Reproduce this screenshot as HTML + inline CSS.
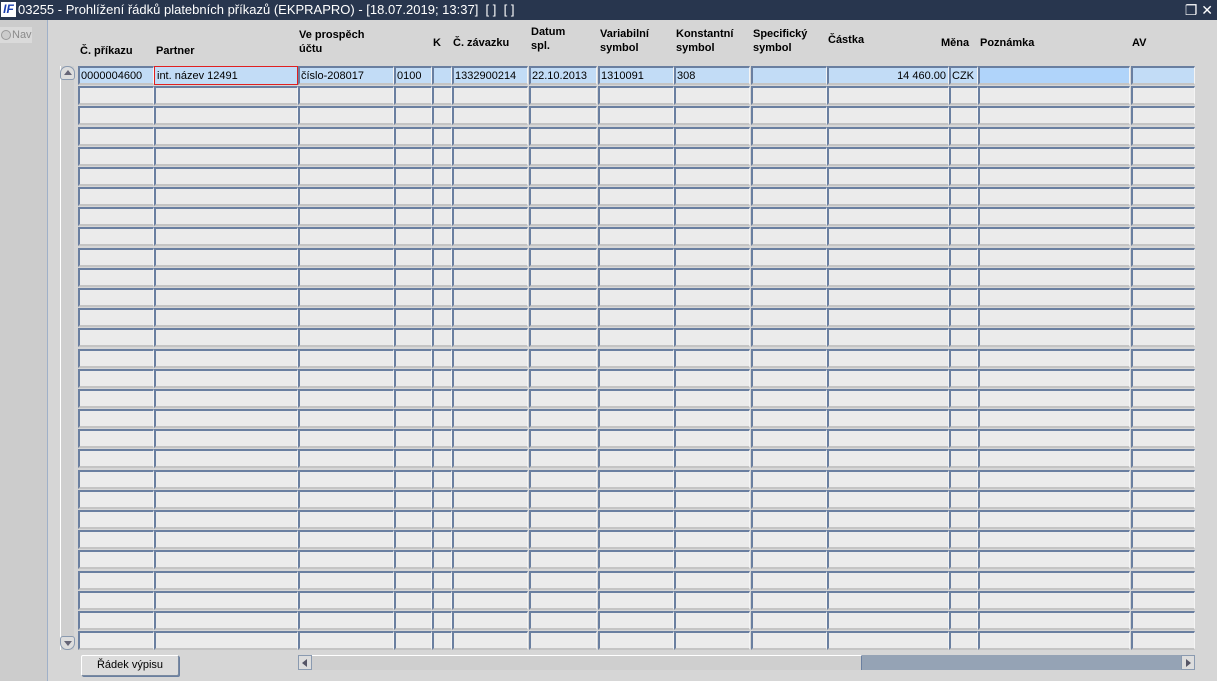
<!DOCTYPE html>
<html><head><meta charset="utf-8"><style>
*{box-sizing:border-box;margin:0;padding:0}
body{width:1217px;height:681px;overflow:hidden;background:#d6d6d6;font-family:"Liberation Sans",Arial,sans-serif;font-size:11px;position:relative;color:#000}
#tb{position:absolute;left:0;top:0;width:1217px;height:20px;background:#28364e;color:#fff;font-size:13px;line-height:20px;padding-left:18px;white-space:nowrap}
#logo{position:absolute;left:1px;top:2px;width:15px;height:15px;background:#fff;color:#1a3fb0;font:bold italic 12px/15px "Liberation Sans",sans-serif;text-align:center}
#left{position:absolute;left:0;top:20px;width:48px;height:661px;background:#cccccc;border-right:1px solid #9fb0c8}
#nav{position:absolute;left:0;top:7px;width:32px;height:16px;background:#dadada;color:#8a8a8a;font-size:11px;line-height:16px;padding-left:12px}
#nav:before{content:"";position:absolute;left:1px;top:3px;width:8px;height:8px;border-radius:50%;border:1px solid #999;background:#ccc}
.h{position:absolute;font-weight:bold;font-size:11px;line-height:14px}
.c{position:absolute;height:19px;background:#ebebeb;border-top:2px solid #6a7fa0;border-left:2px solid #6a7fa0;border-right:1px solid #f4f4f4;border-bottom:2px solid #c4c4c4;font-size:11px;line-height:15px;padding-left:1px;padding-top:1px;white-space:nowrap;overflow:hidden}
.s{background:#c2dcf6}
#vs{position:absolute;left:60px;top:66px;width:14px;height:584px;background:#cfcfcf;border-left:1px solid #fff}
.ab{position:absolute;left:-1px;width:15px;height:14px;border:1px solid #8a9ab0;background:#ddd;border-radius:7px 7px 3px 3px}
#hs{position:absolute;left:298px;top:655px;width:897px;height:15px;background:#95a3b5}
#thumb{position:absolute;left:14px;top:0;width:550px;height:15px;background:#cfcfcf;border-top:1px solid #fff;border-right:1px solid #6a7fa0}
.hb{position:absolute;top:0;width:14px;height:15px;background:#ddd;border:1px solid #8a9ab0}
#btn{position:absolute;left:81px;top:655px;width:98px;height:21px;background:#dcdcdc;border:1px solid #7a8aa0;border-top-color:#fff;border-left-color:#fff;border-radius:2px;text-align:center;line-height:19px;font-size:11px;box-shadow:1px 1px 0 #6a7fa0}
</style></head><body>
<div id="tb"><div id="logo">IF</div>03255 - Prohlížení řádků platebních příkazů (EKPRAPRO) - [18.07.2019; 13:37]&nbsp; [ ]&nbsp; [ ]<span style="position:absolute;right:4px;top:0;font-size:14px">❐ ✕</span></div>
<div id="left"><div id="nav">Nav</div></div>
<div class="h" style="left:80px;top:44px">Č. příkazu</div>
<div class="h" style="left:156px;top:44px">Partner</div>
<div class="h" style="left:299px;top:28px">Ve prospěch<br>účtu</div>
<div class="h" style="left:433px;top:36px">K</div>
<div class="h" style="left:453px;top:36px">Č. závazku</div>
<div class="h" style="left:531px;top:25px">Datum<br>spl.</div>
<div class="h" style="left:600px;top:27px">Variabilní<br>symbol</div>
<div class="h" style="left:676px;top:27px">Konstantní<br>symbol</div>
<div class="h" style="left:753px;top:27px">Specifický<br>symbol</div>
<div class="h" style="left:828px;top:33px">Částka</div>
<div class="h" style="left:941px;top:36px">Měna</div>
<div class="h" style="left:980px;top:36px">Poznámka</div>
<div class="h" style="left:1132px;top:36px">AV</div>
<div id="rows"></div>
<div id="vs"><div class="ab" style="top:0"><span style="position:absolute;left:3px;top:3px;border:4px solid transparent;border-bottom:5px solid #667;border-top:0"></span></div><div class="ab" style="bottom:0;border-radius:3px 3px 7px 7px"><span style="position:absolute;left:3px;top:4px;border:4px solid transparent;border-top:5px solid #667;border-bottom:0"></span></div></div>
<div id="hs"><div class="hb" style="left:0"><span style="position:absolute;left:3px;top:3px;border:4px solid transparent;border-right:5px solid #556;border-left:0"></span></div><div id="thumb"></div><div class="hb" style="right:0"><span style="position:absolute;left:4px;top:3px;border:4px solid transparent;border-left:5px solid #556;border-right:0"></span></div></div>
<div id="btn">Řádek výpisu</div>
<script>
var cols=[[78,76],[154,144],[298,96],[394,38],[432,20],[452,76],[529,68],[598,76],[674,76],[751,76],[827,122],[949,29],[978,152],[1131,64]];
var d0=["0000004600","int. název 12491","číslo-208017","0100","","1332900214","22.10.2013","1310091","308","","14 460.00","CZK","",""];
var h="";
for(var r=0;r<29;r++){var t=Math.round(66+r*20.18);
for(var i=0;i<cols.length;i++){var c=cols[i];var txt=r==0?d0[i]:"";var st="left:"+c[0]+"px;top:"+t+"px;width:"+c[1]+"px;";
if(r==0&&i==1)st+="border:1px solid #e02020;padding-top:2px;padding-left:2px;";if(r==0&&i==10)st+="text-align:right;padding-right:2px;";
if(r==0&&i==12)st+="background:#b0d4fa;";
h+='<div class="c'+(r==0?' s':'')+'" style="'+st+'">'+txt+'</div>';}}
document.getElementById("rows").innerHTML=h;
</script>
</body></html>
